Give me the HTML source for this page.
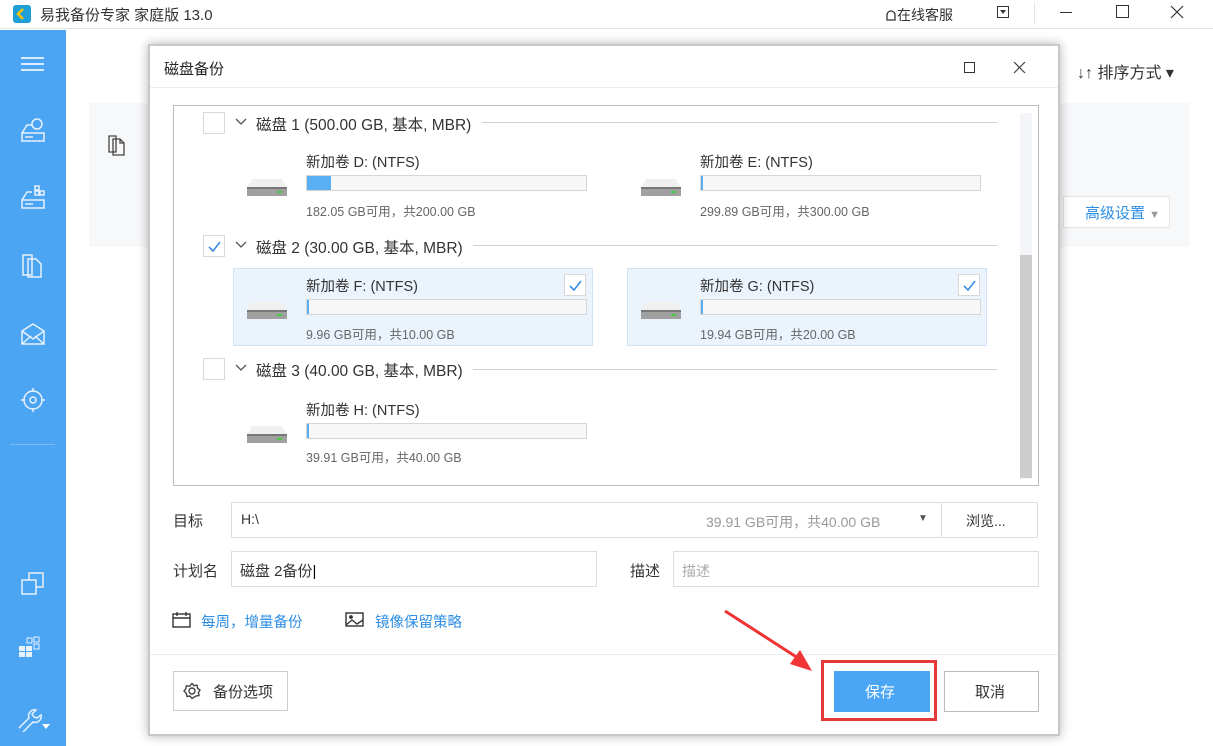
<!DOCTYPE html><html><head><meta charset="utf-8"><style>
*{box-sizing:border-box;margin:0;padding:0}
body{width:1213px;height:746px;overflow:hidden;background:#fff;font-family:"Liberation Sans","Noto Sans CJK SC",sans-serif;color:#333;position:relative;font-size:14px}
.a{position:absolute}
.t{white-space:nowrap}
.cb{position:absolute;width:22px;height:22px;border:1px solid #d8d8d8;background:#fff}
.cb svg{position:absolute;left:4px;top:5px}
.bar{position:absolute;width:281px;height:16px;border:1px solid #d6d6d6;background:#f7f7f7}
.bar i{position:absolute;left:0;top:0;bottom:0;background:#5aaef2}
.nm{position:absolute;font-size:14.5px;color:#333}
.inf{position:absolute;font-size:12.5px;color:#666}
.line{position:absolute;height:1px;background:#cfcfcf}
.card{position:absolute;width:360px;height:78px;border:1px solid #cfe3f5;background:#ebf4fc}
.inp{position:absolute;border:1px solid #ddd;background:#fff;height:36px}
.dh{position:absolute;font-size:15.5px}
</style></head><body>
<div class="a" style="left:0;top:0;width:1213px;height:29px;border-bottom:1px solid #e6e6e6"></div>
<div class="a" style="left:13px;top:5px;width:18px;height:18px;background:#1e9fd8;border-radius:3px"><svg width="18" height="18"><path d="M10 4L5 9l5 5" stroke="#f5c400" stroke-width="2.5" fill="none"/></svg></div>
<div class="a t" style="left:40px;top:4px;font-size:15px;color:#333">易我备份专家 家庭版 13.0</div>
<div class="a t" style="left:885px;top:5px;font-size:14px"><svg width="12" height="14" style="vertical-align:-2px"><path d="M2 12V7a4 4 0 0 1 8 0v5z" fill="none" stroke="#333" stroke-width="1.3"/></svg>在线客服</div>
<div class="a" style="left:997px;top:6px;width:12px;height:12px;border:1.5px solid #333"><div class="a" style="left:2px;top:3px;border:3px solid transparent;border-top:4px solid #333"></div></div>
<div class="a" style="left:1034px;top:2px;width:1px;height:22px;background:#e6e6e6"></div>
<div class="a" style="left:1060px;top:12px;width:12px;height:1.2px;background:#333"></div>
<div class="a" style="left:1116px;top:5px;width:13px;height:13px;border:1.2px solid #333"></div>
<svg class="a" style="left:1170px;top:5px" width="14" height="14"><path d="M1 1l12 12M13 1L1 13" stroke="#333" stroke-width="1.2"/></svg>
<div class="a" style="left:0;top:30px;width:66px;height:716px;background:#4ca5f2"></div>
<div class="a" style="left:21px;top:57px;width:23px;height:2px;background:#d8ecfd;box-shadow:0 6px 0 #d8ecfd,0 12px 0 #d8ecfd"></div>
<svg class="a" style="left:18px;top:115px" width="30" height="30" fill="none" stroke="#e6f2fd" stroke-width="1.5"><path d="M4 18L9 10h5M4 18v8h22v-8z M7 22h8"/><circle cx="19" cy="9" r="5"/></svg>
<svg class="a" style="left:18px;top:182px" width="30" height="30" fill="none" stroke="#e6f2fd" stroke-width="1.5"><path d="M4 18L9 10h5M4 18v8h22v-8z M7 22h8"/><rect x="17" y="4" width="4" height="4"/><rect x="22" y="9" width="4" height="4"/><rect x="17" y="9" width="4" height="4"/></svg>
<svg class="a" style="left:20px;top:252px" width="26" height="28" fill="none" stroke="#e6f2fd" stroke-width="1.5"><path d="M3 3h9v20H3z M8 7h8l5 5v13H8z"/></svg>
<svg class="a" style="left:19px;top:321px" width="28" height="26" fill="none" stroke="#e6f2fd" stroke-width="1.5"><path d="M3 10L14 3l11 7v13H3z M3 23l9-8M25 23l-9-8M3 10l11 8 11-8"/></svg>
<svg class="a" style="left:20px;top:387px" width="26" height="26" fill="none" stroke="#e6f2fd" stroke-width="1.5"><circle cx="13" cy="13" r="9"/><circle cx="13" cy="13" r="3"/><path d="M13 1v4M13 21v4M1 13h4M21 13h4"/></svg>
<div class="a" style="left:10px;top:444px;width:45px;height:1px;background:#7bbcf5"></div>
<svg class="a" style="left:20px;top:570px" width="26" height="26" fill="none" stroke="#e6f2fd" stroke-width="1.5"><rect x="2" y="10" width="14" height="14"/><path d="M9 10V3h14v14h-7"/></svg>
<svg class="a" style="left:18px;top:634px" width="26" height="26" fill="#e6f2fd"><rect x="1" y="12" width="6" height="5"/><rect x="8" y="12" width="6" height="5"/><rect x="1" y="18" width="6" height="5"/><rect x="8" y="18" width="6" height="5"/><rect x="9" y="4" width="5" height="5" fill="none" stroke="#e6f2fd"/><rect x="16" y="3" width="5" height="5" fill="none" stroke="#e6f2fd"/><rect x="16" y="10" width="5" height="5" fill="none" stroke="#e6f2fd"/></svg>
<svg class="a" style="left:15px;top:704px" width="40" height="28" fill="none" stroke="#e6f2fd" stroke-width="1.5"><path d="M4 24l10-10a6 6 0 0 1 7-8l-4 4 2 3 3 1 4-3a6 6 0 0 1-8 7L8 28"/><path d="M27 20h8l-4 5z" fill="#fff" stroke="none"/></svg>
<div class="a" style="left:89px;top:103px;width:1101px;height:144px;background:#f7f8fa"></div>
<svg class="a" style="left:107px;top:134px" width="22" height="24" fill="none" stroke="#444" stroke-width="1.3"><path d="M2 2h7v16H2z M6 5h7l4 4v12H6z M13 5v4h4"/></svg>
<div class="a t" style="left:1077px;top:59px;font-size:16px;color:#333">↓↑ 排序方式 ▾</div>
<div class="a t" style="left:1063px;top:196px;width:107px;height:32px;border:1px solid #e4e4e4;background:#fff;color:#2d8ee6;font-size:15px;padding:5px 0 0 21px">高级设置 <span style="color:#999;font-size:11px">▼</span></div>
<div class="a" style="left:148px;top:44px;width:912px;height:692px;background:#fff;border:2px solid #c8c8c8;box-shadow:0 0 10px rgba(0,0,0,.3)"></div>
<div class="a t" style="left:164px;top:58px;font-size:15px;color:#222">磁盘备份</div>
<div class="a" style="left:964px;top:62px;width:11px;height:11px;border:1.3px solid #333"></div>
<svg class="a" style="left:1013px;top:61px" width="13" height="13"><path d="M1 1l11 11M12 1L1 12" stroke="#444" stroke-width="1.2"/></svg>
<div class="a" style="left:150px;top:87px;width:908px;height:1px;background:#e8eef5"></div>
<div class="a" style="left:173px;top:105px;width:866px;height:381px;border:1px solid #bdbdbd"></div>
<div class="a" style="left:1020px;top:113px;width:12px;height:366px;background:#f3f5f8"></div>
<div class="a" style="left:1020px;top:255px;width:12px;height:223px;background:#cdcdcd"></div>

<div class="cb" style="left:203px;top:112px"></div>
<svg class="a" style="left:235px;top:118px" width="12" height="8"><path d="M1 1l5 5 5-5" stroke="#555" stroke-width="1.3" fill="none"/></svg>
<div class="dh t" style="left:256px;top:113px">磁盘 1 (500.00 GB, 基本, MBR)</div>
<div class="line" style="left:482px;top:122px;width:515px"></div>
<svg class="a" style="left:246px;top:176px" width="42" height="22"><path d="M6 3h30l5 9H1z" fill="#f0f0f0"/><rect x="1" y="11" width="40" height="9" fill="#a0a0a0"/><rect x="1" y="11" width="40" height="2" fill="#777"/><rect x="31" y="15" width="5" height="2" fill="#4c4"/></svg>
<div class="nm t" style="left:306px;top:151px">新加卷 D: (NTFS)</div>
<div class="bar" style="left:306px;top:175px"><i style="width:24px"></i></div>
<div class="inf t" style="left:306px;top:201px">182.05 GB可用，共200.00 GB</div>
<svg class="a" style="left:640px;top:176px" width="42" height="22"><path d="M6 3h30l5 9H1z" fill="#f0f0f0"/><rect x="1" y="11" width="40" height="9" fill="#a0a0a0"/><rect x="1" y="11" width="40" height="2" fill="#777"/><rect x="31" y="15" width="5" height="2" fill="#4c4"/></svg>
<div class="nm t" style="left:700px;top:151px">新加卷 E: (NTFS)</div>
<div class="bar" style="left:700px;top:175px"><i style="width:2px"></i></div>
<div class="inf t" style="left:700px;top:201px">299.89 GB可用，共300.00 GB</div>

<div class="cb" style="left:203px;top:235px"><svg width="13" height="11"><path d="M1 6l4 4 7-9" stroke="#3a8ee6" stroke-width="1.6" fill="none"/></svg></div>
<svg class="a" style="left:235px;top:241px" width="12" height="8"><path d="M1 1l5 5 5-5" stroke="#555" stroke-width="1.3" fill="none"/></svg>
<div class="dh t" style="left:256px;top:236px">磁盘 2 (30.00 GB, 基本, MBR)</div>
<div class="line" style="left:473px;top:245px;width:524px"></div>
<div class="card" style="left:233px;top:268px"></div>
<div class="card" style="left:627px;top:268px"></div>
<div class="cb" style="left:564px;top:274px"><svg width="13" height="11"><path d="M1 6l4 4 7-9" stroke="#3a8ee6" stroke-width="1.6" fill="none"/></svg></div>
<div class="cb" style="left:958px;top:274px"><svg width="13" height="11"><path d="M1 6l4 4 7-9" stroke="#3a8ee6" stroke-width="1.6" fill="none"/></svg></div>
<svg class="a" style="left:246px;top:299px" width="42" height="22"><path d="M6 3h30l5 9H1z" fill="#f0f0f0"/><rect x="1" y="11" width="40" height="9" fill="#a0a0a0"/><rect x="1" y="11" width="40" height="2" fill="#777"/><rect x="31" y="15" width="5" height="2" fill="#4c4"/></svg>
<div class="nm t" style="left:306px;top:275px">新加卷 F: (NTFS)</div>
<div class="bar" style="left:306px;top:299px"><i style="width:2px"></i></div>
<div class="inf t" style="left:306px;top:324px">9.96 GB可用，共10.00 GB</div>
<svg class="a" style="left:640px;top:299px" width="42" height="22"><path d="M6 3h30l5 9H1z" fill="#f0f0f0"/><rect x="1" y="11" width="40" height="9" fill="#a0a0a0"/><rect x="1" y="11" width="40" height="2" fill="#777"/><rect x="31" y="15" width="5" height="2" fill="#4c4"/></svg>
<div class="nm t" style="left:700px;top:275px">新加卷 G: (NTFS)</div>
<div class="bar" style="left:700px;top:299px"><i style="width:2px"></i></div>
<div class="inf t" style="left:700px;top:324px">19.94 GB可用，共20.00 GB</div>

<div class="cb" style="left:203px;top:358px"></div>
<svg class="a" style="left:235px;top:364px" width="12" height="8"><path d="M1 1l5 5 5-5" stroke="#555" stroke-width="1.3" fill="none"/></svg>
<div class="dh t" style="left:256px;top:359px">磁盘 3 (40.00 GB, 基本, MBR)</div>
<div class="line" style="left:473px;top:369px;width:524px"></div>
<svg class="a" style="left:246px;top:423px" width="42" height="22"><path d="M6 3h30l5 9H1z" fill="#f0f0f0"/><rect x="1" y="11" width="40" height="9" fill="#a0a0a0"/><rect x="1" y="11" width="40" height="2" fill="#777"/><rect x="31" y="15" width="5" height="2" fill="#4c4"/></svg>
<div class="nm t" style="left:306px;top:399px">新加卷 H: (NTFS)</div>
<div class="bar" style="left:306px;top:423px"><i style="width:2px"></i></div>
<div class="inf t" style="left:306px;top:447px">39.91 GB可用，共40.00 GB</div>

<div class="a t" style="left:173px;top:510px;font-size:15px">目标</div>
<div class="inp" style="left:231px;top:502px;width:711px"></div>
<div class="a t" style="left:241px;top:511px;font-size:14px">H:\</div>
<div class="a t" style="left:706px;top:512px;font-size:14px;color:#999">39.91 GB可用，共40.00 GB</div>
<div class="a t" style="left:918px;top:513px;font-size:10px;color:#555">▼</div>
<div class="inp" style="left:941px;top:502px;width:97px"></div>
<div class="a t" style="left:966px;top:511px;font-size:14px">浏览...</div>
<div class="a t" style="left:173px;top:560px;font-size:15px">计划名</div>
<div class="inp" style="left:231px;top:551px;width:366px"></div>
<div class="a t" style="left:240px;top:560px;font-size:15px">磁盘 2备份<span style="font-weight:100;color:#000">|</span></div>
<div class="a t" style="left:630px;top:560px;font-size:15px">描述</div>
<div class="inp" style="left:673px;top:551px;width:366px"></div>
<div class="a t" style="left:682px;top:561px;font-size:14px;color:#aaa">描述</div>
<svg class="a" style="left:172px;top:611px" width="20" height="18" fill="none" stroke="#333" stroke-width="1.4"><rect x="1" y="3" width="17" height="13"/><path d="M1 7h17M5 1v4M14 1v4"/></svg>
<div class="a t" style="left:201px;top:611px;font-size:14.5px;color:#2d8ee6">每周，增量备份</div>
<svg class="a" style="left:345px;top:612px" width="20" height="16" fill="none" stroke="#333" stroke-width="1.4"><rect x="1" y="1" width="17" height="13"/><path d="M1 13l6-5 5 4 6-4"/><circle cx="6" cy="5" r="1.2" fill="#333"/></svg>
<div class="a t" style="left:375px;top:611px;font-size:14.5px;color:#2d8ee6">镜像保留策略</div>
<div class="a" style="left:150px;top:654px;width:908px;height:1px;background:#e8eef5"></div>
<div class="a" style="left:173px;top:671px;width:115px;height:40px;border:1px solid #ccc"></div>
<svg class="a" style="left:183px;top:682px" width="18" height="18" fill="none" stroke="#444" stroke-width="1.4"><circle cx="9" cy="9" r="3"/><path d="M9 1.5l2 2.2 3-.5.6 3 2.4 1.8-1.6 2.5.6 3-3 .5L9 16.5l-2-2.5-3 .5-.6-3L1 9l1.8-2.2.6-3 3 .5z"/></svg>
<div class="a t" style="left:213px;top:681px;font-size:15px">备份选项</div>
<div class="a" style="left:821px;top:660px;width:116px;height:61px;border:3px solid #e5393a"></div>
<div class="a" style="left:834px;top:671px;width:96px;height:41px;background:#4aa5f5"></div>
<div class="a t" style="left:865px;top:681px;font-size:15px;color:#fff">保存</div>
<div class="a" style="left:944px;top:671px;width:95px;height:41px;border:1px solid #bbb"></div>
<div class="a t" style="left:975px;top:681px;font-size:15px">取消</div>
<svg class="a" style="left:720px;top:606px" width="100" height="70"><path d="M5 5L78 52" stroke="#f03434" stroke-width="3"/><path d="M70 58L92 65 80 44z" fill="#f03434"/></svg>
</body></html>
